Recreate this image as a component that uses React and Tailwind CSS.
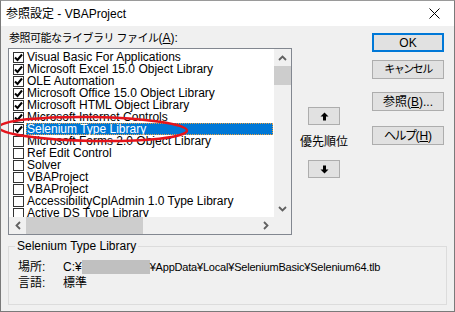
import React from "react";

const font = { fontFamily: '"Liberation Sans", "Noto Sans CJK JP", sans-serif' };

const items = [
  { name: "Visual Basic For Applications", checked: true },
  { name: "Microsoft Excel 15.0 Object Library", checked: true },
  { name: "OLE Automation", checked: true },
  { name: "Microsoft Office 15.0 Object Library", checked: true },
  { name: "Microsoft HTML Object Library", checked: true },
  { name: "Microsoft Internet Controls", checked: true },
  { name: "Selenium Type Library", checked: true, selected: true },
  { name: "Microsoft Forms 2.0 Object Library", checked: false },
  { name: "Ref Edit Control", checked: false },
  { name: "Solver", checked: false },
  { name: "VBAProject", checked: false },
  { name: "VBAProject", checked: false },
  { name: "AccessibilityCplAdmin 1.0 Type Library", checked: false },
  { name: "Active DS Type Library", checked: false },
];

const CheckBox = ({ checked }) => (
  <span className="w-[11px] h-[11px] border border-[#333] bg-white flex items-center justify-center shrink-0">
    {checked && (
      <svg width="9" height="9" viewBox="0 0 9 9">
        <path d="M1 4.5 L3.5 7 L8 1.5" fill="none" stroke="#000" strokeWidth="2" />
      </svg>
    )}
  </span>
);

const Row = ({ data }) => (
  <div className="h-[12px] flex items-center pl-[4px] whitespace-nowrap">
    <CheckBox checked={data.checked} />
    <span
      className={`ml-[2px] h-[12px] leading-[12px] pl-[1px] ${
        data.selected
          ? "bg-[#0078d7] text-white outline-1 outline-dotted outline-[#e8a040] -outline-offset-1 w-[247px]"
          : "text-black"
      }`}
    >
      {data.name}
    </span>
  </div>
);

const WinButton = ({ children, primary, className = "" }) => (
  <div
    className={`w-[72px] h-[19px] flex items-center justify-center bg-[#e1e1e1] text-[12px] text-black ${
      primary ? "border-2 border-[#0078d7]" : "border border-[#adadad]"
    } ${className}`}
  >
    {children}
  </div>
);

const MoveButton = ({ up }) => (
  <div className="w-[32px] h-[18px] bg-[#e1e1e1] border border-[#adadad] flex items-center justify-center">
    <svg width="9" height="9" viewBox="0 0 9 9">
      {up ? (
        <path d="M4.5 0.5 L8.5 4.5 L6 4.5 L6 8.5 L3 8.5 L3 4.5 L0.5 4.5 Z" fill="#000" />
      ) : (
        <path d="M4.5 8.5 L8.5 4.5 L6 4.5 L6 0.5 L3 0.5 L3 4.5 L0.5 4.5 Z" fill="#000" />
      )}
    </svg>
  </div>
);

export default function App() {
  return (
    <div
      className="relative w-[455px] h-[312px] bg-[#f0f0f0] border border-[#7a7a7a] border-t-[#9a9a9a] flex flex-col text-[12px] text-black overflow-hidden"
      style={font}
    >
      {/* title bar */}
      <div className="h-[25px] bg-white flex items-center justify-between pl-[5px] pr-[14px] shrink-0">
        <span className="text-[12px]">参照設定 - VBAProject</span>
        <svg width="11" height="11" viewBox="0 0 11 11">
          <path d="M0.5 0.5 L10.5 10.5 M10.5 0.5 L0.5 10.5" stroke="#000" strokeWidth="1" />
        </svg>
      </div>

      <div className="flex pl-[7px] pt-[5px]">
        {/* left: library list */}
        <div className="flex flex-col w-[284px]">
          <div className="h-[14px] leading-[14px] mb-[3px] pl-[1px]">
            <span className="text-[11px] tracking-[-0.5px]">参照可能なライブラリ ファイル</span>(<span className="underline">A</span>):
          </div>
          <div className="h-[187px] border border-[#828790] bg-white flex flex-col">
            <div className="flex h-[168px]">
              <div className="flex-1 pt-[2px] overflow-hidden">
                {items.map((a, b) => (
                  <Row key={b} data={a} />
                ))}
              </div>
              <div className="w-[17px] bg-[#f0f0f0] flex flex-col items-center">
                <div className="h-[17px] flex items-center justify-center">
                  <svg width="9" height="6" viewBox="0 0 9 6">
                    <path d="M1 5 L4.5 1.5 L8 5" fill="none" stroke="#606060" strokeWidth="1.8" />
                  </svg>
                </div>
                <div className="w-[17px] h-[19px] bg-[#cdcdcd]" />
                <div className="flex-1" />
                <div className="h-[17px] flex items-center justify-center">
                  <svg width="9" height="6" viewBox="0 0 9 6">
                    <path d="M1 1 L4.5 4.5 L8 1" fill="none" stroke="#606060" strokeWidth="1.8" />
                  </svg>
                </div>
              </div>
            </div>
            <div className="flex h-[17px]">
              <div className="flex-1 bg-[#f0f0f0] flex items-center">
                <div className="w-[17px] flex items-center justify-center">
                  <svg width="6" height="9" viewBox="0 0 6 9">
                    <path d="M5 1 L1.5 4.5 L5 8" fill="none" stroke="#606060" strokeWidth="1.8" />
                  </svg>
                </div>
                <div className="w-[117px] h-[17px] bg-[#cdcdcd]" />
                <div className="flex-1" />
                <div className="w-[17px] flex items-center justify-center">
                  <svg width="6" height="9" viewBox="0 0 6 9">
                    <path d="M1 1 L4.5 4.5 L1 8" fill="none" stroke="#606060" strokeWidth="1.8" />
                  </svg>
                </div>
              </div>
              <div className="w-[17px] bg-[#f0f0f0]" />
            </div>
          </div>
        </div>

        {/* middle: priority */}
        <div className="w-[64px] flex flex-col items-center pt-[76px]">
          <MoveButton up />
          <div className="mt-[10px] mb-[11px] h-[14px] leading-[14px]">優先順位</div>
          <MoveButton />
        </div>

        {/* right: buttons */}
        <div className="flex flex-col pl-[16px] pt-[2px]">
          <WinButton primary>OK</WinButton>
          <WinButton className="mt-[8px]">
            <span className="text-[11px] tracking-[-1.5px]">キャンセル</span>
          </WinButton>
          <WinButton className="mt-[13px]">
            参照(<span className="underline">B</span>)...
          </WinButton>
          <WinButton className="mt-[15px]">
            <span className="tracking-[-1.5px]">ヘルプ</span>(<span className="underline">H</span>)
          </WinButton>
        </div>
      </div>

      {/* details group */}
      <div className="relative mx-[7px] mt-[11px] h-[59px] border border-[#dcdcdc] pt-[12px] pl-[9px]">
        <span className="absolute -top-[8px] left-[6px] px-[2px] bg-[#f0f0f0] leading-[14px]">
          Selenium Type Library
        </span>
        <div className="flex items-center h-[16px]">
          <span className="w-[45px]">場所:</span>
          <span>C:¥</span>
          <span className="w-[68px] h-[14px] bg-[#c0c0c0]" />
          <span className="text-[11px] tracking-[-0.2px]">¥AppData¥Local¥SeleniumBasic¥Selenium64.tlb</span>
        </div>
        <div className="flex items-center h-[16px]">
          <span className="w-[45px]">言語:</span>
          <span>標準</span>
        </div>
      </div>

      {/* red annotation ellipse */}
      <svg className="absolute left-0 top-0 pointer-events-none" width="455" height="312" viewBox="0 0 455 312">
        <ellipse cx="92" cy="128" rx="94" ry="12" fill="none" stroke="#e4141c" strokeWidth="2.5" transform="rotate(1 92 128)" />
      </svg>
    </div>
  );
}
